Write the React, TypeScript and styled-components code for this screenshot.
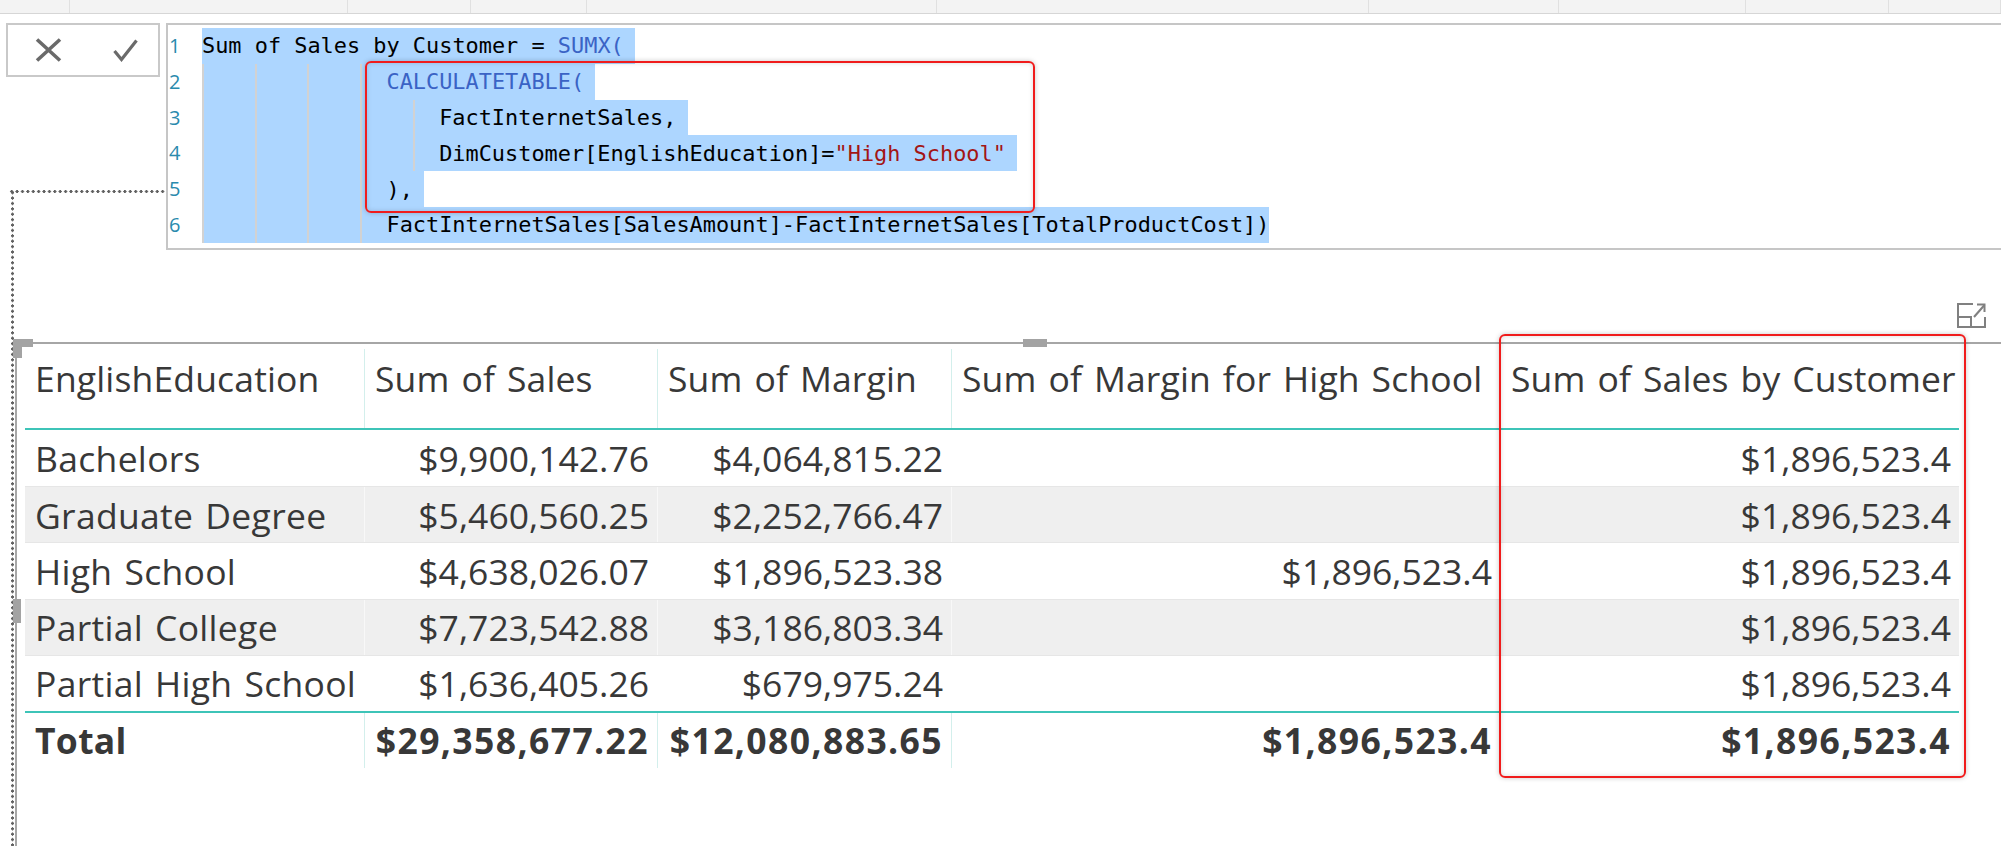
import React from 'react';
import styled, { createGlobalStyle } from 'styled-components';

// formula bar + table visual (Power BI style)

const GlobalStyle = createGlobalStyle`
  html, body {
    margin: 0;
    padding: 0;
    background: #ffffff;
  }
  body {
    width: 2001px;
    height: 846px;
    overflow: hidden;
    font-family: 'Open Sans', 'Noto Sans', sans-serif;
  }
`;

const TEAL = '#3ec4b8';
const HANDLE = '#a3a3a3';

const Page = styled.div`
	position: relative;
	width: 2001px;
	height: 846px;
	overflow: hidden;
	background: #fff;
`;

const TabStrip = styled.div`
	display: flex;
	height: 13px;
	background: #f3f3f3;
	border-bottom: 1px solid #d6d6d6;
`;

const TabCell = styled.div<{ $w: number }>`
	flex: 0 0 ${p => p.$w}px;
	box-sizing: border-box;
	border-right: 1px solid #e0e0e0;
`;

const FormulaBar = styled.div`
	display: flex;
	align-items: flex-start;
	gap: 6px;
	padding: 9px 0 0 6px;
`;

const CommitBox = styled.div`
	flex: 0 0 154px;
	height: 54px;
	box-sizing: border-box;
	border: 2px solid #c9c9c9;
	display: flex;
	align-items: center;
	padding-left: 27px;
	gap: 51px;
`;

const IconButton = styled.button`
	display: flex;
	align-items: center;
	justify-content: center;
	padding: 0;
	border: 0;
	background: none;
	color: #6a6a6a;
`;

const Editor = styled.div`
	position: relative;
	flex: 1;
	height: 227px;
	box-sizing: border-box;
	border: 2px solid #c6c6c6;
	border-right: 0;
	padding-top: 3px;
	display: flex;
`;

const Gutter = styled.div`
	flex: 0 0 34px;
	display: flex;
	flex-direction: column;
`;

const LineNo = styled.div`
	height: 35.8px;
	line-height: 35.8px;
	padding-left: 1px;
	font-family: 'Open Sans', sans-serif;
	font-size: 20px;
	color: #2a8aad;
`;

const Code = styled.div`
	display: flex;
	flex-direction: column;
	font-family: 'DejaVu Sans Mono', 'Liberation Mono', monospace;
	font-size: 21.9px;
	color: #000;
	white-space: pre;
`;

const CodeLine = styled.div`
	height: 35.8px;
	display: flex;
`;

const Selected = styled.span<{ $eol: boolean }>`
	display: flex;
	align-items: center;
	background: #add6ff;
	padding-right: ${p => (p.$eol ? '0.85ch' : '0')};
`;

const Indent = styled.span<{ $cols: number }>`
	align-self: stretch;
	width: ${p => p.$cols}ch;
	background: linear-gradient(to right, #d2d2d2 2px, transparent 2px);
`;

const Token = styled.span<{ $kind?: 'fn' | 'str' }>`
	color: ${p => (p.$kind === 'fn' ? '#3a63c5' : p.$kind === 'str' ? '#a31515' : '#000')};
`;

const Callout = styled.div<{ $l: number; $t: number; $w: number; $h: number }>`
	position: absolute;
	left: ${p => p.$l}px;
	top: ${p => p.$t}px;
	width: ${p => p.$w}px;
	height: ${p => p.$h}px;
	box-sizing: border-box;
	border: 2px solid #f01c1c;
	border-radius: 6px;
	box-shadow: 0 0 5px rgba(0, 0, 0, 0.22), inset 0 0 5px rgba(0, 0, 0, 0.14);
	pointer-events: none;
`;

const Connector = styled.div<{ $dir: 'h' | 'v' }>`
	position: absolute;
	left: ${p => (p.$dir === 'h' ? 9 : 10.5)}px;
	top: 189.5px;
	width: ${p => (p.$dir === 'h' ? '157px' : '3px')};
	height: ${p => (p.$dir === 'h' ? '3px' : '660px')};
	background-image: radial-gradient(circle, #606060 1.3px, transparent 1.7px);
	background-size: ${p => (p.$dir === 'h' ? '5.4px 3px' : '3px 5.4px')};
`;

const Canvas = styled.div`
	padding: 53px 0 0 15px;
`;

const FocusRow = styled.div`
	display: flex;
	justify-content: flex-end;
	height: 25px;
	padding-right: 15px;
	color: #808080;
`;

const Visual = styled.div`
	position: relative;
	margin-top: 14px;
	height: 600px;
	border-top: 2px solid #a6a6a6;
	border-left: 2px solid #a6a6a6;
	padding-left: 8px;
`;

const Handle = styled.div<{ $l: number; $t: number; $w: number; $h: number }>`
	position: absolute;
	left: ${p => p.$l}px;
	top: ${p => p.$t}px;
	width: ${p => p.$w}px;
	height: ${p => p.$h}px;
	background: ${HANDLE};
`;

const Table = styled.div`
	position: relative;
	width: 1934px;
	font-family: 'Open Sans', 'Noto Sans', sans-serif;
	font-size: 35.5px;
	font-weight: 400;
	color: #383838;
`;

const COLS = '339px 293px 294px 549px 459px';

const HeaderRow = styled.div`
	display: grid;
	grid-template-columns: ${COLS};
	height: 84px;
	border-bottom: 2px solid ${TEAL};
`;

const HeaderCell = styled.div`
	margin-top: 5px;
	padding: 7px 8px 0 10px;
	line-height: 44px;
	white-space: nowrap;
	letter-spacing: 0.15px;
	word-spacing: 2.5px;
	&:not(:first-child) {
		border-left: 1px solid #d3efec;
	}
`;

const DataRow = styled.div<{ $alt: boolean }>`
	display: grid;
	grid-template-columns: ${COLS};
	height: 56.2px;
	box-sizing: border-box;
	background: ${p => (p.$alt ? '#efefef' : '#fff')};
	& + & {
		border-top: 1px solid #e6e6e6;
	}
`;

const Cell = styled.div<{ $num?: boolean }>`
	display: flex;
	align-items: center;
	justify-content: ${p => (p.$num ? 'flex-end' : 'flex-start')};
	padding: 0 8px 0 10px;
	white-space: nowrap;
	letter-spacing: ${p => (p.$num ? '0' : '0.3px')};
	word-spacing: 2.5px;
	&:not(:first-child) {
		border-left: 1px solid rgba(255, 255, 255, 0.55);
	}
`;

const TotalRow = styled.div`
	display: grid;
	grid-template-columns: ${COLS};
	height: 55px;
	border-top: 2px solid ${TEAL};
	font-weight: 700;
	& > div:not(:first-child) {
		border-left: 1px solid #d3efec;
		letter-spacing: 1.4px;
	}
`;

const tabs = [70, 278, 123, 116, 350, 432, 190, 187, 143, 112];

type Tok = { t: string; k?: 'fn' | 'str' };
const code: { indent: number[]; toks: Tok[] }[] = [
	{ indent: [], toks: [{ t: 'Sum of Sales by Customer = ' }, { t: 'SUMX(', k: 'fn' }] },
	{ indent: [4, 4, 4, 2], toks: [{ t: 'CALCULATETABLE(', k: 'fn' }] },
	{ indent: [4, 4, 4, 4, 2], toks: [{ t: 'FactInternetSales,' }] },
	{
		indent: [4, 4, 4, 4, 2],
		toks: [{ t: 'DimCustomer[EnglishEducation]=' }, { t: '"High School"', k: 'str' }],
	},
	{ indent: [4, 4, 4, 2], toks: [{ t: '),' }] },
	{
		indent: [4, 4, 4, 2],
		toks: [{ t: 'FactInternetSales[SalesAmount]-FactInternetSales[TotalProductCost])' }],
	},
];

const headers = [
	'EnglishEducation',
	'Sum of Sales',
	'Sum of Margin',
	'Sum of Margin for High School',
	'Sum of Sales by Customer',
];

const rows = [
	['Bachelors', '$9,900,142.76', '$4,064,815.22', '', '$1,896,523.4'],
	['Graduate Degree', '$5,460,560.25', '$2,252,766.47', '', '$1,896,523.4'],
	['High School', '$4,638,026.07', '$1,896,523.38', '$1,896,523.4', '$1,896,523.4'],
	['Partial College', '$7,723,542.88', '$3,186,803.34', '', '$1,896,523.4'],
	['Partial High School', '$1,636,405.26', '$679,975.24', '', '$1,896,523.4'],
];

const total = ['Total', '$29,358,677.22', '$12,080,883.65', '$1,896,523.4', '$1,896,523.4'];

const CancelIcon = () => (
	<svg width="27" height="24" viewBox="0 0 27 24">
		<path d="M2 1.5 L25 22.5 M25 1.5 L2 22.5" stroke="currentColor" strokeWidth="3.6" fill="none" />
	</svg>
);

const CommitIcon = () => (
	<svg width="25" height="23" viewBox="0 0 25 23">
		<path d="M1.5 12 L8.5 20.5 L23.5 1.5" stroke="currentColor" strokeWidth="3.2" fill="none" />
	</svg>
);

const FocusIcon = () => (
	<svg width="29" height="25" viewBox="0 0 29 25">
		<g stroke="currentColor" strokeWidth="2" fill="none">
			<path d="M16 1 H1 V24 H28 V14" />
			<path d="M1 14 H14 V24" />
			<path d="M17 14 L27.5 2" />
			<path d="M20 1.5 H27.5 V9" />
		</g>
	</svg>
);

const App = () => {
	return (
		<Page>
			<GlobalStyle />
			<TabStrip>
				{tabs.map((w, i) => (
					<TabCell key={i} $w={w} />
				))}
			</TabStrip>

			<FormulaBar>
				<CommitBox>
					<IconButton aria-label="cancel">
						<CancelIcon />
					</IconButton>
					<IconButton aria-label="commit">
						<CommitIcon />
					</IconButton>
				</CommitBox>
				<Editor>
					<Gutter>
						{code.map((_, i) => (
							<LineNo key={i}>{i + 1}</LineNo>
						))}
					</Gutter>
					<Code>
						{code.map((line, i) => (
							<CodeLine key={i}>
								<Selected $eol={i < code.length - 1}>
									{line.indent.map((c, j) => (
										<Indent key={j} $cols={c} />
									))}
									{line.toks.map((tok, j) => (
										<Token key={j} $kind={tok.k}>
											{tok.t}
										</Token>
									))}
								</Selected>
							</CodeLine>
						))}
					</Code>
					<Callout $l={197} $t={36} $w={670} $h={152} />
				</Editor>
			</FormulaBar>

			<Connector $dir="h" />
			<Connector $dir="v" />

			<Canvas>
				<FocusRow>
					<FocusIcon />
				</FocusRow>
				<Visual>
					<Handle $l={-4} $t={-5} $w={20} $h={8} />
					<Handle $l={-4} $t={-5} $w={9} $h={19} />
					<Handle $l={1006} $t={-5} $w={24} $h={8} />
					<Handle $l={-4} $t={255} $w={8} $h={24} />
					<Table>
						<HeaderRow>
							{headers.map(h => (
								<HeaderCell key={h}>{h}</HeaderCell>
							))}
						</HeaderRow>
						{rows.map((r, i) => (
							<DataRow key={r[0]} $alt={i % 2 === 1}>
								{r.map((v, j) => (
									<Cell key={j} $num={j > 0}>
										{v}
									</Cell>
								))}
							</DataRow>
						))}
						<TotalRow>
							{total.map((v, j) => (
								<Cell key={j} $num={j > 0}>
									{v}
								</Cell>
							))}
						</TotalRow>
						<Callout $l={1474} $t={-10} $w={467} $h={444} />
					</Table>
				</Visual>
			</Canvas>
		</Page>
	);
};

export default App;
